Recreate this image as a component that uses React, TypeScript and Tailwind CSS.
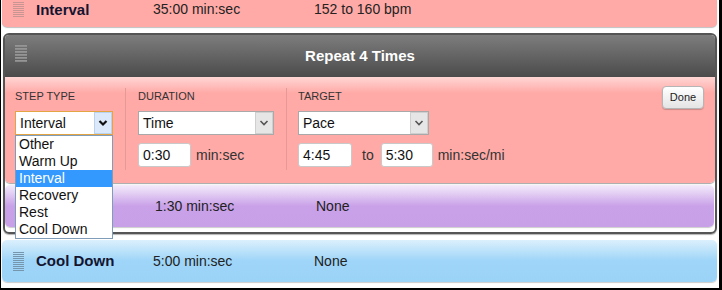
import React from "react";

function Handle({ lines, color, gap = 1, thick = 1, w = 11 }: { lines: number; color: string; gap?: number; thick?: number; w?: number }) {
  const h = lines * (thick + gap) - gap;
  return (
    <svg width={w} height={h} viewBox={`0 0 ${w} ${h}`} className="block shrink-0">
      {Array.from({ length: lines }).map((_, i) => (
        <rect key={i} x={0} y={i * (thick + gap)} width={w} height={thick} fill={color} />
      ))}
    </svg>
  );
}

function Chevron({ color, sw }: { color: string; sw: number }) {
  return (
    <svg width="10" height="8" viewBox="0 0 10 8" className="block">
      <polyline points="1.5,2 5,5.5 8.5,2" fill="none" stroke={color} strokeWidth={sw} />
    </svg>
  );
}

function Select({ value, width, focused }: { value: string; width: string; focused?: boolean }) {
  return (
    <div
      className={`${width} h-[24px] flex bg-white border ${focused ? "border-[#e3a443]" : "border-[#a9a9a9]"}`}
    >
      <div className="flex-1 flex items-center pl-[4px] text-[14px] text-[#111]">{value}</div>
      <div
        className={`w-[18px] flex items-center justify-center border ${
          focused ? "bg-[#dce9fa] border-[#b9d2ee]" : "bg-[#e6e6e6] border-[#cfcfcf]"
        }`}
      >
        <Chevron color={focused ? "#111" : "#555"} sw={focused ? 2.2 : 1.6} />
      </div>
    </div>
  );
}

function Input({ value, width }: { value: string; width: string }) {
  return (
    <div className={`${width} h-[24px] bg-white border border-[#c9c9c9] rounded-[3px] flex items-center pl-[4px] text-[14px] text-[#111]`}>
      {value}
    </div>
  );
}

export default function App() {
  return (
    <div className="w-[722px] h-[290px] box-border border-l-[1px] border-r-[3px] border-b-[2px] border-black bg-white overflow-hidden font-['Liberation_Sans',Arial,sans-serif] text-[#222]">
      <div className="pl-[1px] pr-[2px]">
        {/* top row */}
        <div className="h-[27px] bg-[#ffaaa7] rounded-b-[5px] shadow-[0_1px_1px_rgba(0,0,0,0.25)] flex items-start pl-[11px]">
          <div className="w-[23px] pt-[2px]">
            <Handle lines={8} color="#c99593" />
          </div>
          <div className="w-[117px] text-[15px] font-bold leading-[17px] pt-[1px] text-[#141430]">Interval</div>
          <div className="w-[161px] text-[14px] leading-[17px] pt-[1px] text-[#222]">35:00 min:sec</div>
          <div className="text-[14px] leading-[17px] pt-[1px] text-[#222]">152 to 160 bpm</div>
        </div>

        {/* repeat box */}
        <div className="mt-[6px] ml-[1px] border-2 border-[#555] rounded-[6px] overflow-visible shadow-[0_1px_1px_rgba(0,0,0,0.3)]">
          <div className="h-[42px] rounded-t-[4px] bg-[linear-gradient(to_bottom,#7d7d7d,#4b4b4b)] relative flex items-center justify-center">
            <div className="absolute left-[10px] top-[10px]">
              <Handle lines={6} color="#959595" gap={1.2} thick={1.8} w={12} />
            </div>
            <div className="text-white text-[15px] font-bold">Repeat 4 Times</div>
          </div>

          {/* edit panel */}
          <div className="h-[106px] bg-[linear-gradient(to_bottom,#ffd6d4_0px,#ffaaa7_16px)] rounded-b-[5px] shadow-[0_1px_1px_rgba(0,0,0,0.35)] flex items-start pl-[10px] pt-[11px] relative">
            <div className="w-[111px] h-[82px] border-r border-[#e59a98] relative">
              <div className="mt-[2px] text-[11px] leading-[13px] text-[#333]">STEP TYPE</div>
              <div className="mt-[8px] relative">
                <Select value="Interval" width="w-[98px]" focused />
                <div className="absolute left-0 top-full w-[98px] bg-white border border-[#7f9db9] z-10">
                  {["Other", "Warm Up", "Interval", "Recovery", "Rest", "Cool Down"].map((o) => (
                    <div
                      key={o}
                      className={`h-[17px] leading-[17px] pl-[3px] text-[14px] ${
                        o === "Interval" ? "bg-[#3399ff] text-white" : "text-[#111]"
                      }`}
                    >
                      {o}
                    </div>
                  ))}
                </div>
              </div>
            </div>

            <div className="w-[161px] h-[82px] border-r border-[#e59a98] pl-[12px]">
              <div className="mt-[2px] text-[11px] leading-[13px] text-[#333]">DURATION</div>
              <div className="mt-[8px]">
                <Select value="Time" width="w-[136px]" />
              </div>
              <div className="mt-[8px] flex items-center">
                <Input value="0:30" width="w-[53px]" />
                <span className="ml-[5px] text-[14px] text-[#333]">min:sec</span>
              </div>
            </div>

            <div className="pl-[11px]">
              <div className="mt-[2px] text-[11px] leading-[13px] text-[#333]">TARGET</div>
              <div className="mt-[8px]">
                <Select value="Pace" width="w-[131px]" />
              </div>
              <div className="mt-[8px] flex items-center">
                <Input value="4:45" width="w-[54px]" />
                <span className="ml-[10px] text-[14px] text-[#333]">to</span>
                <div className="ml-[7px]">
                  <Input value="5:30" width="w-[52px]" />
                </div>
                <span className="ml-[5px] text-[14px] text-[#333]">min:sec/mi</span>
              </div>
            </div>

            <div className="ml-auto mr-[11px] -mt-[2px]">
              <div className="w-[42px] h-[23px] rounded-[4px] border border-[#b5b5b5] bg-[linear-gradient(to_bottom,#ffffff,#e4e4e4)] shadow-[0_1px_1px_rgba(0,0,0,0.2)] flex items-center justify-center text-[11px] text-[#222]">
                Done
              </div>
            </div>
          </div>

          {/* recovery row (title hidden under the open list) */}
          <div className="mt-[2px] mb-[5px] mr-[1px] h-[42px] rounded-[5px] bg-[linear-gradient(to_bottom,#f4ecfb_0%,#c9a1e8_50%,#c8a0e8_100%)] shadow-[0_1px_1px_rgba(0,0,0,0.2)] flex items-center pl-[11px]">
            <div className="w-[23px]">
              <Handle lines={10} color="#9d80b8" />
            </div>
            <div className="w-[116px]" />
            <div className="w-[161px] text-[14px] text-[#222]">1:30 min:sec</div>
            <div className="text-[14px] text-[#222]">None</div>
          </div>
        </div>

        {/* cool down row */}
        <div className="mt-[6px] h-[42px] rounded-[5px] bg-[linear-gradient(to_bottom,#dcf0fd_0%,#9ed5f8_50%,#9bd3f7_100%)] shadow-[0_1px_1px_rgba(0,0,0,0.2)] flex items-center pl-[11px]">
          <div className="w-[23px]">
            <Handle lines={10} color="#7596ad" />
          </div>
          <div className="w-[117px] text-[15px] font-bold text-[#141430]">Cool Down</div>
          <div className="w-[161px] text-[14px] text-[#222]">5:00 min:sec</div>
          <div className="text-[14px] text-[#222]">None</div>
        </div>
      </div>
    </div>
  );
}
